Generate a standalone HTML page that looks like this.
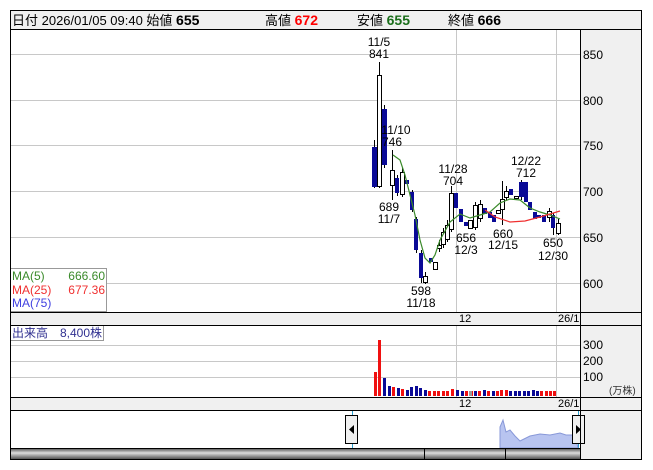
<!DOCTYPE html>
<html><head><meta charset="utf-8"><style>
html,body{margin:0;padding:0;background:#fff;width:653px;height:470px;overflow:hidden}
svg{display:block;font-family:"Liberation Sans","Noto Sans CJK JP",sans-serif}
</style></head><body>
<svg width="653" height="470" viewBox="0 0 653 470">
<!-- header -->
<rect x="10.5" y="10.5" width="631" height="19" fill="#f0f0f0" stroke="#000"/>
<text x="12" y="25" font-size="13" fill="#000">日付 2026/01/05 09:40 始値 <tspan font-weight="bold" font-size="14">655</tspan></text>
<text x="265" y="25" font-size="13">高値 <tspan font-weight="bold" font-size="14" fill="#f00">672</tspan></text>
<text x="357" y="25" font-size="13">安値 <tspan font-weight="bold" font-size="14" fill="#1a6e1a">655</tspan></text>
<text x="448" y="25" font-size="13">終値 <tspan font-weight="bold" font-size="14">666</tspan></text>
<!-- right axis bg -->
<rect x="580" y="30" width="61" height="282" fill="#f0f0f0"/>
<rect x="580" y="325" width="61" height="72" fill="#f0f0f0"/>
<rect x="580" y="410" width="61" height="49" fill="#f0f0f0"/>
<rect x="10" y="312" width="631" height="13" fill="#f0f0f0"/>
<rect x="10" y="397" width="631" height="13" fill="#f0f0f0"/>
<!-- grid price -->
<g stroke="#c8c8c8" stroke-width="1">
<line x1="10" y1="54.5" x2="580" y2="54.5"/><line x1="10" y1="100.5" x2="580" y2="100.5"/>
<line x1="10" y1="145.5" x2="580" y2="145.5"/><line x1="10" y1="191.5" x2="580" y2="191.5"/>
<line x1="10" y1="237.5" x2="580" y2="237.5"/><line x1="10" y1="283.5" x2="580" y2="283.5"/>
<line x1="456.5" y1="30" x2="456.5" y2="312"/><line x1="556.5" y1="30" x2="556.5" y2="312"/>
<line x1="10" y1="345.5" x2="580" y2="345.5"/><line x1="10" y1="361.5" x2="580" y2="361.5"/><line x1="10" y1="377.5" x2="580" y2="377.5"/>
<line x1="456.5" y1="325" x2="456.5" y2="397"/><line x1="556.5" y1="325" x2="556.5" y2="397"/>
</g>
<g font-size="12" fill="#000">
<text x="583" y="59">850</text><text x="583" y="105">800</text><text x="583" y="150">750</text>
<text x="583" y="196">700</text><text x="583" y="242">650</text><text x="583" y="288">600</text>
<text x="459" y="322" font-size="11">12</text><text x="558" y="322" font-size="11">26/1</text>
<text x="459" y="407" font-size="11">12</text><text x="558" y="407" font-size="11">26/1</text>
<text x="583" y="349">300</text><text x="583" y="365">200</text><text x="583" y="381">100</text>
<text x="609" y="394" font-size="10" fill="#333">(万株)</text>
</g>
<!-- wicks -->
<g stroke="#000" stroke-width="1">
<line x1="374.5" y1="140" x2="374.5" y2="188"/><line x1="379.5" y1="62" x2="379.5" y2="188"/>
<line x1="384.5" y1="105" x2="384.5" y2="168"/><line x1="392.5" y1="150" x2="392.5" y2="200"/>
<line x1="397.5" y1="175" x2="397.5" y2="196"/><line x1="402.5" y1="168" x2="402.5" y2="197"/>
<line x1="412.5" y1="190" x2="412.5" y2="212"/><line x1="416.5" y1="217" x2="416.5" y2="253"/>
<line x1="421.5" y1="250" x2="421.5" y2="283"/><line x1="425.5" y1="272" x2="425.5" y2="284"/>
<line x1="439.5" y1="240" x2="439.5" y2="252"/><line x1="443.5" y1="228" x2="443.5" y2="248"/>
<line x1="447.5" y1="220" x2="447.5" y2="242"/><line x1="451.5" y1="186" x2="451.5" y2="232"/>
<line x1="475.5" y1="202" x2="475.5" y2="230"/><line x1="480.5" y1="200" x2="480.5" y2="222"/>
<line x1="502.5" y1="181" x2="502.5" y2="225"/><line x1="506.5" y1="186" x2="506.5" y2="200"/>
<line x1="521.5" y1="180" x2="521.5" y2="200"/><line x1="549.5" y1="208" x2="549.5" y2="222"/>
<line x1="553.5" y1="213" x2="553.5" y2="235"/><line x1="558.5" y1="219" x2="558.5" y2="235"/>
</g>
<!-- blue candles -->
<g fill="#0a0a96">
<rect x="372" y="147" width="5" height="40"/><rect x="382" y="109" width="5" height="56"/>
<rect x="395" y="178" width="4" height="15"/><rect x="405" y="180" width="4" height="4"/>
<rect x="410" y="192" width="4" height="18"/><rect x="414" y="219" width="4" height="31"/>
<rect x="419" y="253" width="4" height="25"/><rect x="429" y="258" width="4" height="4"/>
<rect x="454" y="193" width="4" height="15"/><rect x="459" y="209" width="4" height="13"/>
<rect x="464" y="222" width="4" height="4"/><rect x="483" y="208" width="4" height="6"/>
<rect x="488" y="212" width="4" height="6"/><rect x="492" y="215" width="4" height="7"/>
<rect x="509" y="189" width="4" height="6"/><rect x="519" y="182" width="5" height="15"/>
<rect x="524" y="182" width="4" height="20"/><rect x="528" y="202" width="4" height="8"/>
<rect x="533" y="212" width="4" height="7"/><rect x="537" y="215" width="4" height="3"/>
<rect x="542" y="215" width="4" height="7"/><rect x="551" y="215" width="4" height="13"/>
</g>
<!-- white candles -->
<g fill="#fff" stroke="#000">
<rect x="377.5" y="75.5" width="4" height="111"/><rect x="390.5" y="170.5" width="4" height="15"/>
<rect x="400.5" y="172.5" width="4" height="22"/><rect x="423.5" y="276.5" width="4" height="6"/>
<rect x="433.5" y="262.5" width="4" height="7"/><rect x="437.5" y="245.5" width="4" height="3"/>
<rect x="441.5" y="232.5" width="4" height="12"/><rect x="445.5" y="225.5" width="4" height="14"/>
<rect x="449.5" y="193.5" width="4" height="36"/><rect x="468.5" y="220.5" width="4" height="8"/>
<rect x="473.5" y="205.5" width="4" height="22"/><rect x="478.5" y="204.5" width="4" height="14"/>
<rect x="496.5" y="210.5" width="4" height="3"/><rect x="500.5" y="199.5" width="4" height="10"/>
<rect x="504.5" y="191.5" width="4" height="6"/><rect x="514.5" y="196.5" width="4" height="2"/>
<rect x="547.5" y="211.5" width="4" height="6"/><rect x="556.5" y="223.5" width="4" height="10"/>
</g>
<!-- MAs -->
<polyline fill="none" stroke="#3a8a2a" stroke-width="1.2" points="393,155 400,160 405,175 410,195 415,215 420,240 425,258 430,263 435,255 440,240 450,222 460,214 470,218 480,215 490,212 500,203 510,199 520,200 530,208 540,212 550,215 560,219"/>
<polyline fill="none" stroke="#f03030" stroke-width="1.2" points="485,210 495,217 510,222 525,221 540,217 550,214 560,211"/>
<!-- labels -->
<g font-size="12" fill="#000" text-anchor="middle">
<text x="379" y="46">11/5</text><text x="379" y="58">841</text>
<text x="396" y="134">11/10</text><text x="392" y="146">746</text>
<text x="389" y="211">689</text><text x="389" y="223">11/7</text>
<text x="421" y="295">598</text><text x="421" y="307">11/18</text>
<text x="453" y="173">11/28</text><text x="453" y="185">704</text>
<text x="466" y="242">656</text><text x="466" y="254">12/3</text>
<text x="503" y="238">660</text><text x="503" y="249">12/15</text>
<text x="526" y="165">12/22</text><text x="526" y="177">712</text>
<text x="553" y="247">650</text><text x="553" y="260">12/30</text>
</g>
<!-- legend -->
<rect x="10.5" y="268.5" width="96" height="43" fill="#fff" stroke="#999"/>
<g font-size="12">
<text x="12" y="280" fill="#3a8a2a">MA(5)</text><text x="105" y="280" fill="#3a8a2a" text-anchor="end">666.60</text>
<text x="12" y="294" fill="#f03030">MA(25)</text><text x="105" y="294" fill="#f03030" text-anchor="end">677.36</text>
<text x="12" y="307" fill="#4040e0">MA(75)</text>
</g>
<rect x="10.5" y="325.5" width="93" height="15" fill="#fff" stroke="#999"/>
<text x="12" y="337" font-size="12" fill="#303090">出来高　8,400株</text>
<!-- volume bars -->
<g fill="#f01010">
<rect x="374" y="372" width="3" height="24"/><rect x="378" y="340" width="3" height="56"/>
<rect x="392" y="387" width="3" height="9"/><rect x="401" y="389" width="3" height="7"/>
<rect x="428" y="391" width="3" height="5"/><rect x="433" y="391" width="3" height="5"/>
<rect x="437" y="391" width="3" height="5"/><rect x="442" y="391" width="3" height="5"/>
<rect x="446" y="391" width="3" height="5"/><rect x="451" y="389" width="3" height="7"/>
<rect x="465" y="391" width="3" height="5"/><rect x="470" y="391" width="3" height="5"/>
<rect x="478" y="391" width="3" height="5"/><rect x="487" y="391" width="3" height="5"/>
<rect x="496" y="391" width="3" height="5"/><rect x="500" y="390" width="3" height="6"/>
<rect x="505" y="390" width="3" height="6"/><rect x="540" y="391" width="3" height="5"/>
<rect x="545" y="391" width="3" height="5"/><rect x="549" y="391" width="3" height="5"/>
<rect x="553" y="391" width="3" height="5"/>
</g>
<g fill="#0a0a96">
<rect x="383" y="378" width="3" height="18"/><rect x="388" y="386" width="3" height="10"/>
<rect x="397" y="388" width="3" height="8"/><rect x="406" y="390" width="3" height="6"/>
<rect x="410" y="387" width="3" height="9"/><rect x="415" y="386" width="3" height="10"/>
<rect x="419" y="388" width="3" height="8"/><rect x="424" y="390" width="3" height="6"/>
<rect x="456" y="390" width="3" height="6"/><rect x="461" y="391" width="3" height="5"/>
<rect x="474" y="391" width="3" height="5"/><rect x="483" y="390" width="3" height="6"/>
<rect x="492" y="391" width="3" height="5"/><rect x="509" y="391" width="3" height="5"/>
<rect x="514" y="391" width="3" height="5"/><rect x="518" y="391" width="3" height="5"/>
<rect x="523" y="391" width="3" height="5"/><rect x="527" y="391" width="3" height="5"/>
<rect x="532" y="390" width="3" height="6"/><rect x="536" y="391" width="3" height="5"/>
</g>
<rect x="469" y="391" width="3" height="5" fill="#999"/>
<!-- navigator -->
<line x1="352.5" y1="410" x2="352.5" y2="448" stroke="#2aa0d0"/>
<line x1="578.5" y1="410" x2="578.5" y2="448" stroke="#2aa0d0"/>
<polygon points="500,448 500,427 503,420 506,432 510,430 515,436 520,441 530,436 540,434 550,435 560,433 566,435 575,435 578,448" fill="#b8c4f0" stroke="#8898d8"/>
<rect x="345.5" y="415.5" width="12" height="28" fill="#f0f0f0" stroke="#000"/>
<polygon points="349,429.5 354,425 354,434" fill="#000"/>
<rect x="572.5" y="415.5" width="12" height="28" fill="#f0f0f0" stroke="#000"/>
<polygon points="581,429.5 576,425 576,434" fill="#000"/>
<defs><linearGradient id="g" x1="0" y1="0" x2="0" y2="1"><stop offset="0" stop-color="#444"/><stop offset=".45" stop-color="#ddd"/><stop offset="1" stop-color="#555"/></linearGradient></defs>
<rect x="10" y="448" width="570" height="11" fill="url(#g)"/>
<line x1="424.5" y1="448" x2="424.5" y2="459" stroke="#000"/><line x1="505.5" y1="448" x2="505.5" y2="459" stroke="#000"/>
<!-- frame lines -->
<g stroke="#000" fill="none">
<rect x="10.5" y="10.5" width="631" height="449"/>
<line x1="580.5" y1="29" x2="580.5" y2="459"/>
<line x1="10" y1="29.5" x2="641" y2="29.5"/>
<line x1="10" y1="312.5" x2="641" y2="312.5"/><line x1="10" y1="325.5" x2="641" y2="325.5"/>
<line x1="10" y1="397.5" x2="641" y2="397.5"/><line x1="10" y1="410.5" x2="641" y2="410.5"/>
<line x1="10" y1="448.5" x2="580" y2="448.5"/>
</g>
</svg>
</body></html>
